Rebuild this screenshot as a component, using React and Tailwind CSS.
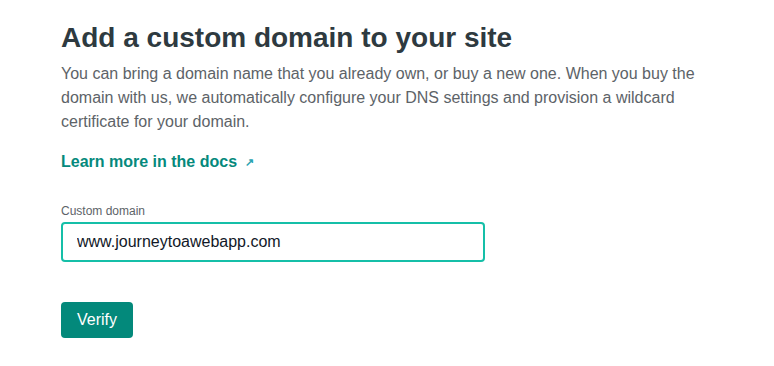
import React, { useState } from 'react';

function App() {
  const [domain, setDomain] = useState('www.journeytoawebapp.com');

  return (
    <div className="min-h-screen bg-white font-['Liberation_Sans',Arial,sans-serif]">
      <div className="pl-[61px] pr-8 pt-[20px]">
        <h1 className="text-[28px] leading-[36px] font-bold text-[#2e3a40]">
          Add a custom domain to your site
        </h1>
        <p className="mt-[6px] max-w-[660px] text-[16px] leading-[24px] text-[#5d6368]">
          You can bring a domain name that you already own, or buy a new one. When you buy the
          domain with us, we automatically configure your DNS settings and provision a wildcard
          certificate for your domain.
        </p>

        <a href="#" className="mt-[16px] inline-flex items-center text-[16px] leading-[24px] font-bold text-[#05897c]">
          Learn more in the docs
          <span className="ml-[8px] text-[11px] text-[#2aa4b0]">↗</span>
        </a>

        <form className="mt-[29px]" onSubmit={(e) => e.preventDefault()}>
          <label className="block text-[12px] leading-[16px] text-[#5d6368]">Custom domain</label>
          <input
            type="text"
            value={domain}
            onChange={(e) => setDomain(e.target.value)}
            className="mt-[3px] block h-[40px] w-[424px] rounded-[4px] border-2 border-[#15bfa8] px-[14px] text-[16px] text-[#111827] outline-none"
          />
          <button
            type="submit"
            className="mt-[40px] block h-[36px] w-[72px] rounded-[4px] bg-[#03897b] text-[16px] text-white"
          >
            Verify
          </button>
        </form>
      </div>
    </div>
  );
}

export default App;
